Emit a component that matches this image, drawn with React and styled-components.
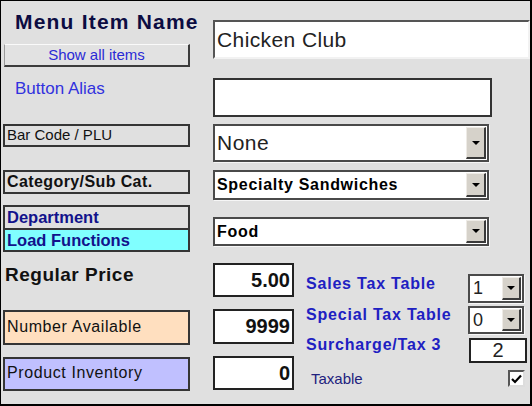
import React from "react";
import styled, { createGlobalStyle } from "styled-components";

const GlobalStyle = createGlobalStyle`
  html, body { margin: 0; padding: 0; background: #fff; }
  body { font-family: "Liberation Sans", Arial, sans-serif; }
`;

const Frame = styled.div`
  width: 532px;
  height: 406px;
  box-sizing: border-box;
  border: solid #000;
  border-width: 1px 2px 2px 1px;
  background: #e0e0e0;
  padding-left: 2px;
  display: flex;
  flex-direction: column;
  overflow: hidden;
`;

const Row = styled.div`
  display: flex;
  align-items: flex-start;
  gap: 23px;
  flex: none;
  margin-top: ${p => p.$mt || 0}px;
  height: ${p => p.$h}px;
`;

const LeftCell = styled.div`
  width: 187px;
  flex: none;
  display: flex;
  flex-direction: column;
`;

const Title = styled.div`
  margin: 9px 0 0 12px;
  height: 24px;
  line-height: 24px;
  font-size: 21px;
  font-weight: bold;
  letter-spacing: 1.2px;
  color: #0c0c42;
  white-space: nowrap;
`;

const ShowButton = styled.div`
  margin: 10px 0 0 1px;
  height: 23px;
  box-sizing: border-box;
  border: solid;
  border-width: 1px 2px 2px 1px;
  border-color: #fafafa #3c3c3c #3c3c3c #9a9a9a;
  background: #e2e2e2;
  color: #2a2ad6;
  font-size: 15px;
  line-height: 19px;
  text-align: center;
`;

const AliasLabel = styled.div`
  margin: 1px 0 0 12px;
  font-size: 17px;
  line-height: 20px;
  color: #3232de;
`;

const TextField = styled.div`
  box-sizing: border-box;
  height: ${p => p.$h}px;
  width: ${p => (p.$w ? `${p.$w}px` : "auto")};
  flex: ${p => (p.$w ? "none" : "1")};
  margin-top: ${p => p.$mt || 0}px;
  background: #fff;
  border: 2px solid;
  border-color: ${p => (p.$sunken ? "#555 #f2f2f2 #f2f2f2 #555" : "#333")};
  font-size: 21px;
  letter-spacing: 0.4px;
  color: #222;
  padding: 0 2px;
  display: flex;
  align-items: center;
`;

const LabelBox = styled.div`
  box-sizing: border-box;
  width: 187px;
  flex: none;
  height: ${p => p.$h}px;
  margin-top: ${p => p.$mt || 0}px;
  border: 2px solid #353535;
  background: ${p => p.$bg || "#e0e0e0"};
  padding: ${p => p.$pt || 0}px 2px 0;
  font-size: ${p => p.$size}px;
  line-height: ${p => p.$size + 2}px;
  font-weight: ${p => (p.$bold ? "bold" : "normal")};
  letter-spacing: ${p => p.$ls || 0}px;
  color: #111;
  white-space: nowrap;
  overflow: hidden;
`;

const DeptBox = styled.div`
  box-sizing: border-box;
  width: 187px;
  height: 47px;
  flex: none;
  border: 2px solid #353535;
  display: flex;
  flex-direction: column;
`;

const DeptHalf = styled.div`
  flex: 1;
  background: ${p => p.$bg};
  border-top: ${p => (p.$divider ? "2px solid #353535" : "none")};
  padding: 0 2px;
  font-size: 16.5px;
  line-height: 20px;
  font-weight: bold;
  color: #12128c;
`;

const Combo = styled.div`
  box-sizing: border-box;
  width: ${p => p.$w}px;
  height: ${p => p.$h}px;
  margin-top: ${p => p.$mt || 0}px;
  margin-right: ${p => p.$mr || 0}px;
  flex: none;
  background: #fff;
  border: 2px solid #4a4a4a;
  box-shadow: 1px 1px 0 #f6f6f6;
  display: flex;
  align-items: stretch;
`;

const ComboText = styled.div`
  flex: 1;
  display: flex;
  align-items: center;
  padding-left: ${p => p.$pl || 2}px;
  font-size: ${p => p.$size}px;
  font-weight: ${p => (p.$bold ? "bold" : "normal")};
  letter-spacing: ${p => p.$ls || 0}px;
  color: ${p => (p.$bold ? "#000" : "#222")};
  white-space: nowrap;
`;

const ArrowButton = styled.div`
  width: ${p => p.$w || 20}px;
  flex: none;
  margin: 1px 1px 1px 0;
  box-sizing: border-box;
  background: #d6d2ca;
  border: solid;
  border-width: 1px 2px 2px 1px;
  border-color: #eeebe6 #3a3a3a #3a3a3a #eeebe6;
  display: flex;
  align-items: center;
  justify-content: center;

  &::after {
    content: "";
    border-left: 4px solid transparent;
    border-right: 4px solid transparent;
    border-top: 4px solid #000;
  }
`;

const Bottom = styled.div`
  margin-top: 11px;
  display: grid;
  grid-template-columns: 210px 93px 221px;
  grid-template-rows: 46px 47px 46px;
  flex: none;
`;

const PriceLabel = styled.div`
  margin: 1px 0 0 2px;
  font-size: 19px;
  line-height: 22px;
  font-weight: bold;
  letter-spacing: 0.5px;
  color: #111;
`;

const ValueBox = styled.div`
  box-sizing: border-box;
  width: 81px;
  height: ${p => p.$h}px;
  margin-top: ${p => p.$mt || 0}px;
  background: #fff;
  border: 2px solid #222;
  padding-right: 2px;
  display: flex;
  align-items: center;
  justify-content: flex-end;
  font-size: 20px;
  font-weight: bold;
  color: #111;
`;

const TaxArea = styled.div`
  grid-column: 3;
  grid-row: 1 / span 3;
  margin-top: 11px;
  display: flex;
  flex-direction: column;
`;

const TaxRow = styled.div`
  height: 36px;
  display: flex;
  align-items: flex-start;
  justify-content: space-between;
`;

const TaxLabel = styled.div`
  margin-top: ${p => p.$mt || 0}px;
  font-size: 16px;
  line-height: 18px;
  font-weight: bold;
  letter-spacing: 0.8px;
  color: #2020c2;
  white-space: nowrap;
`;

const TaxableLabel = styled.div`
  margin: 0 0 0 5px;
  font-size: 15px;
  line-height: 17px;
  color: #22227e;
`;

const SmallBox = styled.div`
  box-sizing: border-box;
  width: 58px;
  height: 25px;
  background: #fff;
  border: 2px solid #222;
  font-size: 20px;
  line-height: 21px;
  text-align: center;
  color: #222;
`;

const CheckBox = styled.div`
  box-sizing: border-box;
  width: 17px;
  height: 17px;
  margin-right: 2px;
  background: #fff;
  border: 2px solid;
  border-color: #555 #ddd #ddd #555;
  display: flex;
  align-items: center;
  justify-content: center;
`;

export default function App() {
  return (
    <>
      <GlobalStyle />
      <Frame>
        <Row $h={66}>
          <LeftCell>
            <Title>Menu Item Name</Title>
            <ShowButton>Show all items</ShowButton>
          </LeftCell>
          <TextField $h={39} $mt={19} $sunken>Chicken Club</TextField>
        </Row>

        <Row $mt={11} $h={39}>
          <LeftCell>
            <AliasLabel>Button Alias</AliasLabel>
          </LeftCell>
          <TextField $h={39} $w={279} />
        </Row>

        <Row $mt={7} $h={38}>
          <LabelBox $h={23} $size={15}>Bar Code / PLU</LabelBox>
          <Combo $w={276} $h={38}>
            <ComboText $size={21} $ls={0.5}>None</ComboText>
            <ArrowButton />
          </Combo>
        </Row>

        <Row $mt={8} $h={30}>
          <LabelBox $h={24} $size={16} $bold $pt={1} $ls={0.4}>Category/Sub Cat.</LabelBox>
          <Combo $w={276} $h={30}>
            <ComboText $size={16} $bold $ls={0.7}>Specialty Sandwiches</ComboText>
            <ArrowButton />
          </Combo>
        </Row>

        <Row $mt={5} $h={47}>
          <DeptBox>
            <DeptHalf $bg="#e0e0e0">Department</DeptHalf>
            <DeptHalf $bg="#80ffff" $divider>Load Functions</DeptHalf>
          </DeptBox>
          <Combo $w={276} $h={29} $mt={12}>
            <ComboText $size={16} $bold $ls={0.7}>Food</ComboText>
            <ArrowButton />
          </Combo>
        </Row>

        <Bottom>
          <PriceLabel>Regular Price</PriceLabel>
          <ValueBox $h={34}>5.00</ValueBox>
          <TaxArea>
            <TaxRow>
              <TaxLabel $mt={1}>Sales Tax Table</TaxLabel>
              <Combo $w={56} $h={29} $mr={3}>
                <ComboText $size={18} $pl={3}>1</ComboText>
                <ArrowButton $w={19} />
              </Combo>
            </TaxRow>
            <TaxRow>
              <TaxLabel>Special Tax Table</TaxLabel>
              <Combo $w={56} $h={28} $mr={3}>
                <ComboText $size={18} $pl={3}>0</ComboText>
                <ArrowButton $w={19} />
              </Combo>
            </TaxRow>
            <TaxRow>
              <TaxLabel $mt={-2}>Surcharge/Tax 3</TaxLabel>
              <SmallBox>2</SmallBox>
            </TaxRow>
            <TaxRow>
              <TaxableLabel>Taxable</TaxableLabel>
              <CheckBox>
                <svg width="11" height="10" viewBox="0 0 11 10">
                  <path d="M1 5 L4 8 L10 1.5" fill="none" stroke="#000" strokeWidth="2.2" />
                </svg>
              </CheckBox>
            </TaxRow>
          </TaxArea>

          <LabelBox $h={35} $mt={1} $bg="#ffdfbf" $size={16} $pt={6} $ls={0.6}>Number Available</LabelBox>
          <ValueBox $h={35}>9999</ValueBox>

          <LabelBox $h={34} $mt={1} $bg="#c0c0ff" $size={16} $pt={5} $ls={0.6}>Product Inventory</LabelBox>
          <ValueBox $h={34}>0</ValueBox>
        </Bottom>
      </Frame>
    </>
  );
}
